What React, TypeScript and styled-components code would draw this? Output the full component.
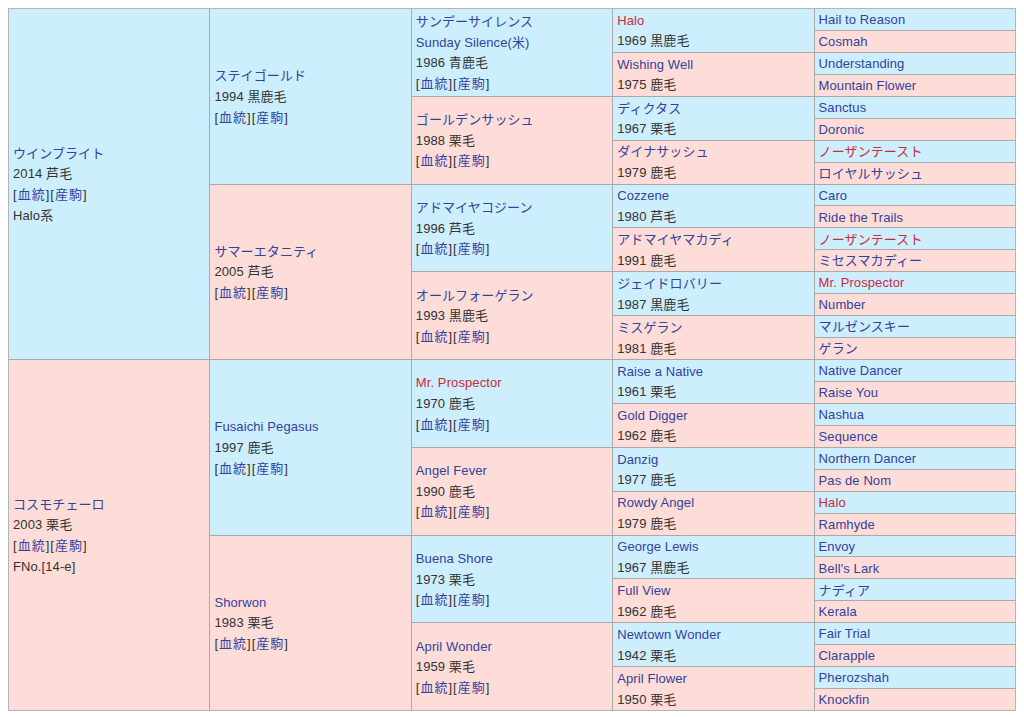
import React from "react";
import styled, { createGlobalStyle } from "styled-components";

const GlobalStyle = createGlobalStyle`
  html, body { margin: 0; padding: 0; background: #ffffff; }
  body {
    padding: 8px;
    font-family: "Liberation Sans", "Noto Sans CJK JP", sans-serif;
    font-size: 13px;
    color: #333333;
  }
`;

const Pedigree = styled.div`
  display: grid;
  grid-template-columns: repeat(5, 1fr);
  grid-template-rows: repeat(32, 1fr);
  grid-auto-flow: column;
  gap: 1px;
  width: 1008px;
  height: 703px;
  box-sizing: border-box;
  border: 1px solid #b4b4b4;
  background: #a9a9a9;
`;

type Sex = "m" | "f";

const Cell = styled.div<{ $span: number; $sex: Sex }>`
  grid-row: span ${(p) => p.$span};
  background: ${(p) => (p.$sex === "m" ? "#cdeefd" : "#fedcd7")};
  display: flex;
  flex-direction: column;
  justify-content: center;
  padding: 2px 4px 0;
  line-height: 20.6px;
  white-space: nowrap;
  overflow: hidden;
`;

const Line = styled.div<{ $spaced?: boolean }>`
  letter-spacing: ${(p) => (p.$spaced ? "1px" : "0.1px")};
`;

const Name = styled.span<{ $red?: boolean }>`
  color: ${(p) => (p.$red ? "#cc2a3a" : "#33429e")};
`;

const Plain = styled.span`
  color: #333333;
`;

const Link = styled.span`
  color: #33429e;
`;

type Horse = {
  name: string;
  red?: boolean;
  alt?: string;
  info?: string;
  links?: boolean;
  extra?: string;
};

const col1: Horse[] = [
  { name: "ウインブライト", info: "2014 芦毛", links: true, extra: "Halo系" },
  { name: "コスモチェーロ", info: "2003 栗毛", links: true, extra: "FNo.[14-e]" },
];

const col2: Horse[] = [
  { name: "ステイゴールド", info: "1994 黒鹿毛", links: true },
  { name: "サマーエタニティ", info: "2005 芦毛", links: true },
  { name: "Fusaichi Pegasus", info: "1997 鹿毛", links: true },
  { name: "Shorwon", info: "1983 栗毛", links: true },
];

const col3: Horse[] = [
  { name: "サンデーサイレンス", alt: "Sunday Silence(米)", info: "1986 青鹿毛", links: true },
  { name: "ゴールデンサッシュ", info: "1988 栗毛", links: true },
  { name: "アドマイヤコジーン", info: "1996 芦毛", links: true },
  { name: "オールフォーゲラン", info: "1993 黒鹿毛", links: true },
  { name: "Mr. Prospector", red: true, info: "1970 鹿毛", links: true },
  { name: "Angel Fever", info: "1990 鹿毛", links: true },
  { name: "Buena Shore", info: "1973 栗毛", links: true },
  { name: "April Wonder", info: "1959 栗毛", links: true },
];

const col4: Horse[] = [
  { name: "Halo", red: true, info: "1969 黒鹿毛" },
  { name: "Wishing Well", info: "1975 鹿毛" },
  { name: "ディクタス", info: "1967 栗毛" },
  { name: "ダイナサッシュ", info: "1979 鹿毛" },
  { name: "Cozzene", info: "1980 芦毛" },
  { name: "アドマイヤマカディ", info: "1991 鹿毛" },
  { name: "ジェイドロバリー", info: "1987 黒鹿毛" },
  { name: "ミスゲラン", info: "1981 鹿毛" },
  { name: "Raise a Native", info: "1961 栗毛" },
  { name: "Gold Digger", info: "1962 鹿毛" },
  { name: "Danzig", info: "1977 鹿毛" },
  { name: "Rowdy Angel", info: "1979 鹿毛" },
  { name: "George Lewis", info: "1967 黒鹿毛" },
  { name: "Full View", info: "1962 鹿毛" },
  { name: "Newtown Wonder", info: "1942 栗毛" },
  { name: "April Flower", info: "1950 栗毛" },
];

const col5: Horse[] = [
  "Hail to Reason", "Cosmah", "Understanding", "Mountain Flower",
  "Sanctus", "Doronic", "*ノーザンテースト", "ロイヤルサッシュ",
  "Caro", "Ride the Trails", "*ノーザンテースト", "ミセスマカディー",
  "*Mr. Prospector", "Number", "マルゼンスキー", "ゲラン",
  "Native Dancer", "Raise You", "Nashua", "Sequence",
  "Northern Dancer", "Pas de Nom", "*Halo", "Ramhyde",
  "Envoy", "Bell's Lark", "ナディア", "Kerala",
  "Fair Trial", "Clarapple", "Pherozshah", "Knockfin",
].map((n) => (n.startsWith("*") ? { name: n.slice(1), red: true } : { name: n }));

const columns: { span: number; horses: Horse[] }[] = [
  { span: 16, horses: col1 },
  { span: 8, horses: col2 },
  { span: 4, horses: col3 },
  { span: 2, horses: col4 },
  { span: 1, horses: col5 },
];

const HorseCell: React.FC<{ horse: Horse; span: number; sex: Sex }> = ({ horse, span, sex }) => (
  <Cell $span={span} $sex={sex}>
    <Line>
      <Name $red={horse.red}>{horse.name}</Name>
    </Line>
    {horse.alt && (
      <Line>
        <Name>{horse.alt}</Name>
      </Line>
    )}
    {horse.info && (
      <Line>
        <Plain>{horse.info}</Plain>
      </Line>
    )}
    {horse.links && (
      <Line $spaced>
        <Plain>[</Plain>
        <Link>血統</Link>
        <Plain>][</Plain>
        <Link>産駒</Link>
        <Plain>]</Plain>
      </Line>
    )}
    {horse.extra && (
      <Line>
        <Plain>{horse.extra}</Plain>
      </Line>
    )}
  </Cell>
);

export default function App() {
  return (
    <>
      <GlobalStyle />
      <Pedigree>
        {columns.map((col, ci) =>
          col.horses.map((h, i) => (
            <HorseCell
              key={`${ci}-${i}`}
              horse={h}
              span={col.span}
              sex={i % 2 === 0 ? "m" : "f"}
            />
          ))
        )}
      </Pedigree>
    </>
  );
}
